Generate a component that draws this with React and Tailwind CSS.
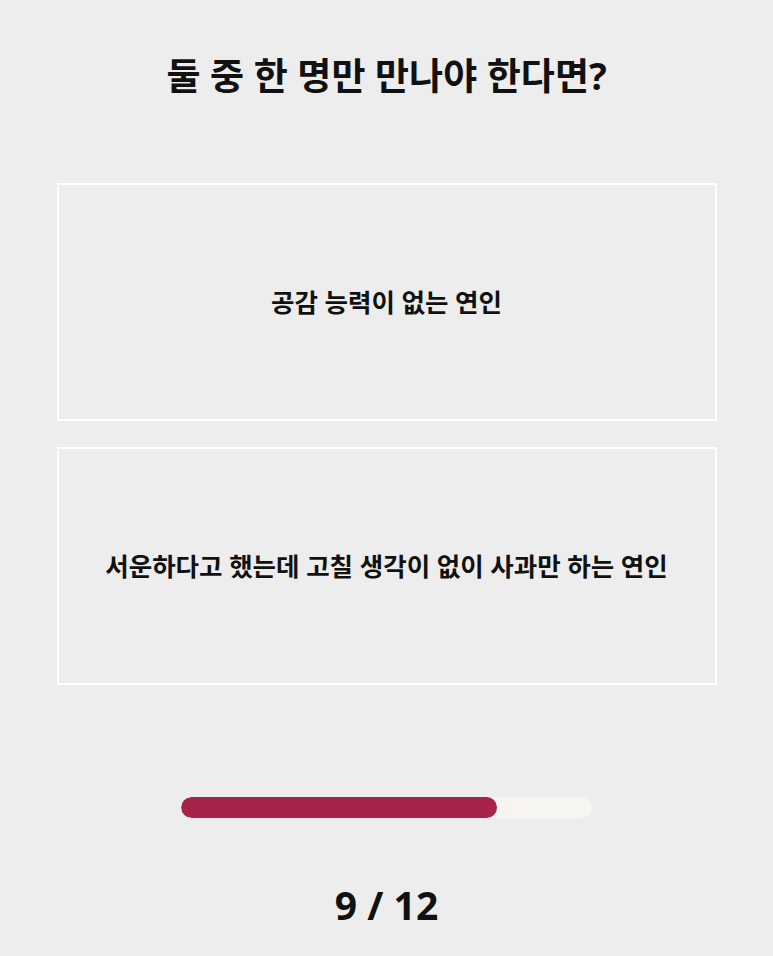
import React from 'react';

const QUESTION = '둘 중 한 명만 만나야 한다면?';
const CHOICES = ['공감 능력이 없는 연인', '서운하다고 했는데 고칠 생각이 없이 사과만 하는 연인'];

const ChoiceCard = ({ label }) => (
  <button className="w-[660px] h-[238px] border-2 border-white bg-[#ededed] flex items-center justify-center text-[25.5px] font-bold text-[#111]">
    {label}
  </button>
);

export default function App() {
  const current = 9;
  const total = 12;

  return (
    <div
      className="w-[773px] h-[956px] bg-[#ededed] flex flex-col items-center"
      style={{ fontFamily: '"Noto Sans", "Noto Sans CJK KR", sans-serif' }}
    >
      {/* 질문 */}
      <h1 className="mt-[52px] text-[37px] leading-[48px] font-bold text-[#111]">{QUESTION}</h1>

      {/* 선택지 */}
      <div className="mt-[83px] flex flex-col gap-[26px]">
        {CHOICES.map((c) => (
          <ChoiceCard key={c} label={c} />
        ))}
      </div>

      {/* 진행 바 */}
      <div className="mt-[112px] w-[411px] h-[21px] rounded-full bg-[#f7f5f2] overflow-hidden">
        <div className="h-full w-[316px] rounded-full bg-[#a6234a]" />
      </div>

      <p className="mt-[61px] text-[39px] leading-[52px] font-bold text-[#111]">
        {current} / {total}
      </p>
    </div>
  );
}
